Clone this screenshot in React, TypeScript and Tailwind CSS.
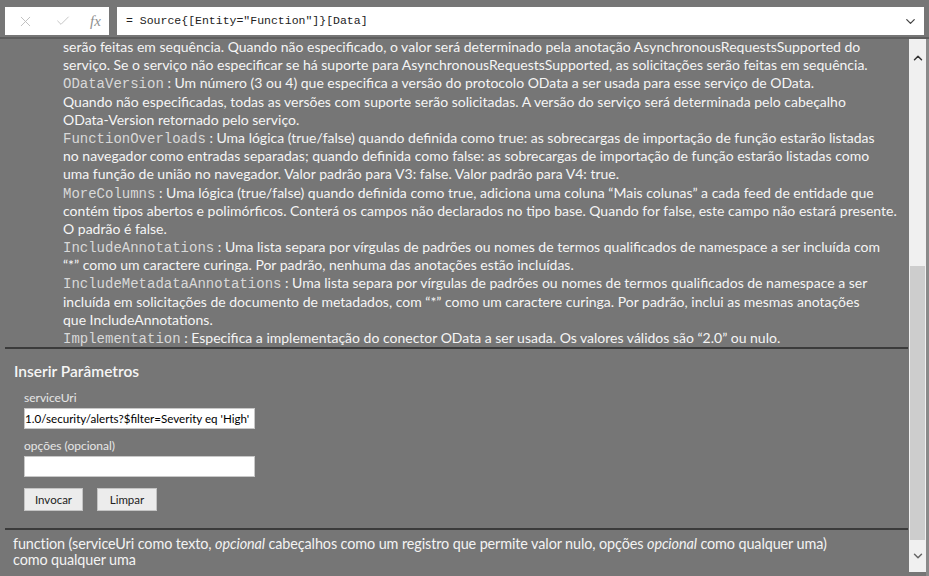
import { X, Check, ChevronDown, ChevronUp } from "lucide-react";

const body = "font-['Lato','Open_Sans',sans-serif]";
const mono = "font-['Liberation_Mono','Courier_New',monospace] text-[14px] leading-[18px] text-[#d9d9d9]";

type Line = { code?: string; text: string };

const lines: Line[] = [
    { text: "serão feitas em sequência. Quando não especificado, o valor será determinado pela anotação AsynchronousRequestsSupported do" },
    { text: "serviço. Se o serviço não especificar se há suporte para AsynchronousRequestsSupported, as solicitações serão feitas em sequência." },
    { code: "ODataVersion", text: "Um número (3 ou 4) que especifica a versão do protocolo OData a ser usada para esse serviço de OData." },
    { text: "Quando não especificadas, todas as versões com suporte serão solicitadas. A versão do serviço será determinada pelo cabeçalho" },
    { text: "OData-Version retornado pelo serviço." },
    { code: "FunctionOverloads", text: "Uma lógica (true/false) quando definida como true: as sobrecargas de importação de função estarão listadas" },
    { text: "no navegador como entradas separadas; quando definida como false: as sobrecargas de importação de função estarão listadas como" },
    { text: "uma função de união no navegador. Valor padrão para V3: false. Valor padrão para V4: true." },
    { code: "MoreColumns", text: "Uma lógica (true/false) quando definida como true, adiciona uma coluna “Mais colunas” a cada feed de entidade que" },
    { text: "contém tipos abertos e polimórficos. Conterá os campos não declarados no tipo base. Quando for false, este campo não estará presente." },
    { text: "O padrão é false." },
    { code: "IncludeAnnotations", text: "Uma lista separa por vírgulas de padrões ou nomes de termos qualificados de namespace a ser incluída com" },
    { text: "“*” como um caractere curinga. Por padrão, nenhuma das anotações estão incluídas." },
    { code: "IncludeMetadataAnnotations", text: "Uma lista separa por vírgulas de padrões ou nomes de termos qualificados de namespace a ser" },
    { text: "incluída em solicitações de documento de metadados, com “*” como um caractere curinga. Por padrão, inclui as mesmas anotações" },
    { text: "que IncludeAnnotations." },
    { code: "Implementation", text: "Especifica a implementação do conector OData a ser usada. Os valores válidos são “2.0” ou nulo." },
];

function ParamField({ label, value }: { label: string; value: string }) {
    return (
        <div className="flex flex-col">
            <span className="text-[12px] text-[#e6e6e6] h-[16px] leading-[16px]">{label}</span>
            <div className="mt-[2px] w-[231px] h-[21px] bg-white border border-[#c8c8c8] overflow-hidden flex items-center">
                <span className="whitespace-nowrap text-[11.6px] text-black">{value}</span>
            </div>
        </div>
    );
}

export default function App() {
    return (
        <div className={`w-[929px] h-[576px] bg-[#767676] flex flex-col overflow-hidden ${body}`}>
            {/* formula bar */}
            <div className="h-[39px] flex gap-[8px] px-[5px] pt-[7px] border-b-2 border-[#5e5e5e] shrink-0">
                <div className="w-[104px] h-[28px] bg-white flex items-center text-[#bdbdbd]">
                    <X className="ml-[12px]" size={17} strokeWidth={1.3} />
                    <Check className="ml-[21px]" size={16} strokeWidth={1.3} />
                    <span className="ml-[19px] font-['Liberation_Serif',serif] italic text-[15px] text-[#8f8f8f]">fx</span>
                </div>
                <div className="flex-1 h-[28px] bg-white flex items-center pl-[9px] pr-[6px]">
                    <span className="flex-1 font-['Liberation_Mono',monospace] text-[11.5px] text-[#222]">= Source{'{'}[Entity="Function"]{'}'}[Data]</span>
                    <ChevronDown size={15} strokeWidth={2} className="text-[#444]" />
                </div>
            </div>

            <div className="flex flex-1 min-h-0">
                <div className="flex-1 flex flex-col ml-[5px] mr-[1px]">
                    {/* description text */}
                    <div className="h-[310px] overflow-hidden pl-[58px] border-b-2 border-[#3b3b3b] text-[14px] text-[#f5f5f5]">
                        <div className="-mt-[1px]">
                            {lines.map((l, i) => (
                                <div key={i} className="whitespace-nowrap h-[18.2px] leading-[18px]">
                                    {l.code && <span className={mono}>{l.code}</span>}
                                    {l.code ? " : " : ""}
                                    {l.text}
                                </div>
                            ))}
                        </div>
                    </div>

                    {/* parameters panel */}
                    <div className="h-[181px] border-b-2 border-[#3b3b3b] pl-[9px] pt-[12px]">
                        <h2 className="text-[15.5px] text-[#f5f5f5] font-semibold leading-[20px]">Inserir Parâmetros</h2>
                        <div className="pl-[10px] mt-[9px] flex flex-col gap-[9px]">
                            <ParamField label="serviceUri" value="1.0/security/alerts?$filter=Severity eq 'High'" />
                            <ParamField label="opções (opcional)" value="" />
                            <div className="flex gap-[14px] mt-[2px]">
                                <button className="w-[59px] h-[23px] bg-[#ececec] border border-[#c4c4c4] text-[11.5px] text-[#222]">Invocar</button>
                                <button className="w-[60px] h-[23px] bg-[#ececec] border border-[#c4c4c4] text-[11.5px] text-[#222]">Limpar</button>
                            </div>
                        </div>
                    </div>

                    {/* function signature */}
                    <div className="pl-[8px] pt-[6px] text-[14.4px] text-[#f3f3f3] leading-[16px] tracking-[-0.1px]">
                        function (serviceUri como texto, <i>opcional</i> cabeçalhos como um registro que permite valor nulo, opções <i>opcional</i> como qualquer uma)
                        <br />
                        como qualquer uma
                    </div>
                </div>

                {/* scrollbar */}
                <div className="w-[17px] mb-[4px] bg-[#f0f0f0] flex flex-col items-center">
                    <div className="h-[37px] flex items-center justify-center text-[#333]">
                        <ChevronUp size={14} strokeWidth={2.5} />
                    </div>
                    <div className="h-[190px]" />
                    <div className="w-[15px] flex-1 bg-[#cdcdcd]" />
                    <div className="h-[32px] flex items-center justify-center text-[#666]">
                        <ChevronDown size={14} strokeWidth={2.5} />
                    </div>
                </div>
                <div className="w-[3px] bg-[#8a8a8a]" />
            </div>
        </div>
    );
}
